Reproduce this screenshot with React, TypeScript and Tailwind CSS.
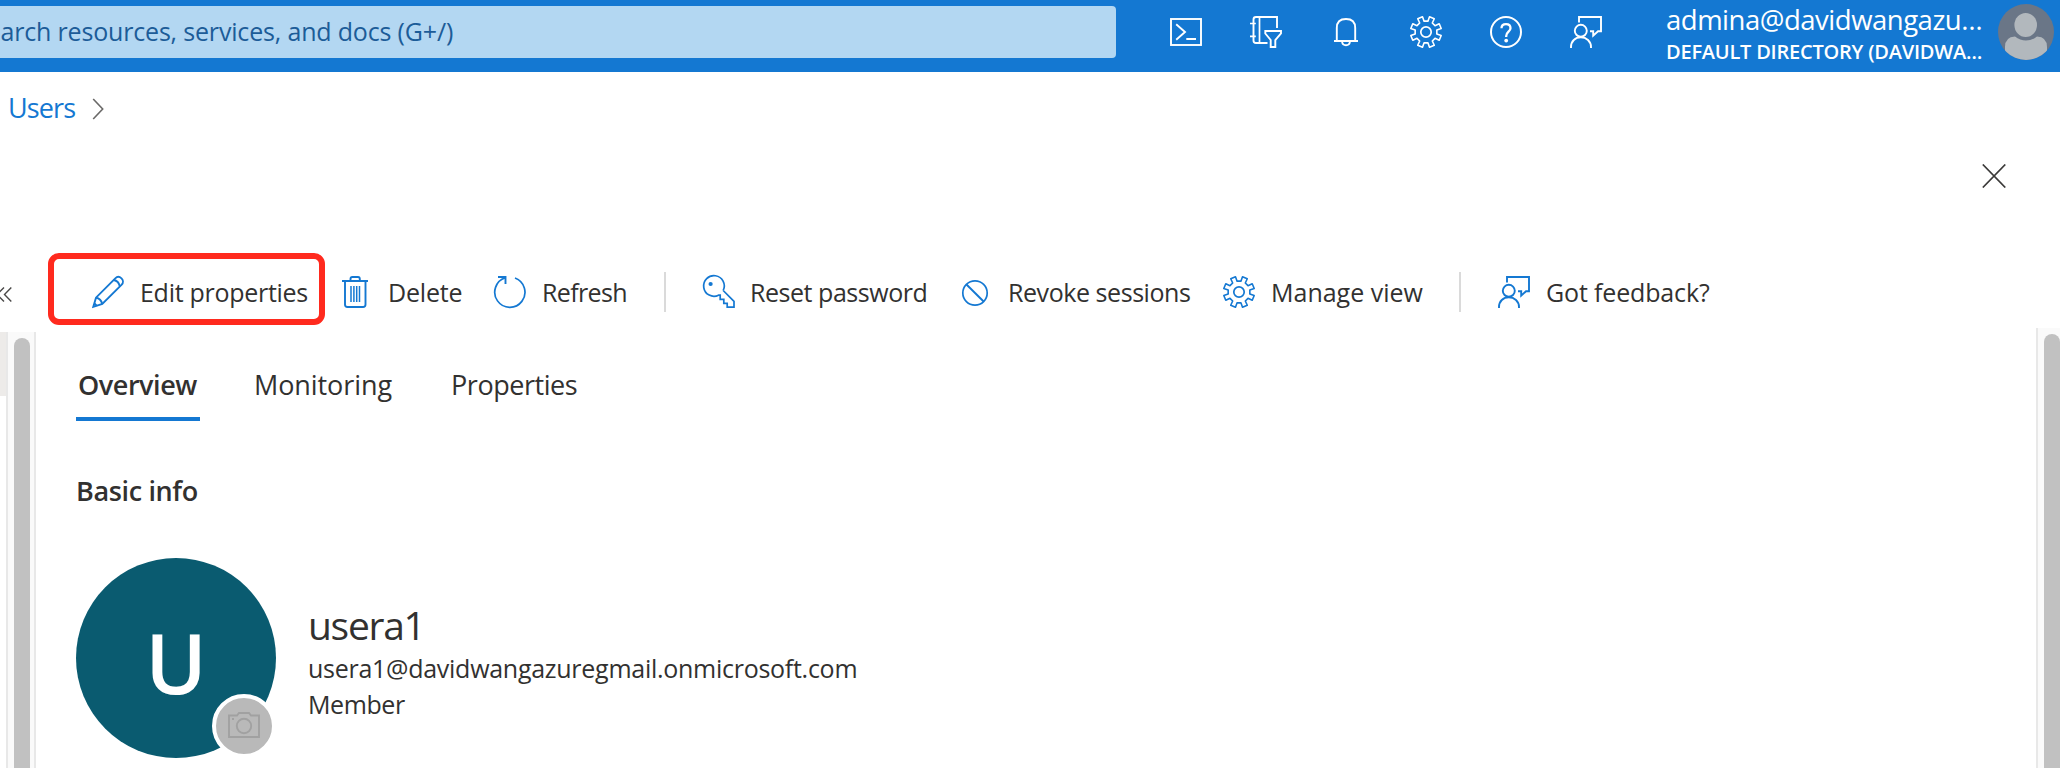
import React from "react";

type IconProps = { className?: string; children: React.ReactNode };

function Icon({ className = "", children }: IconProps) {
  return (
    <svg
      viewBox="0 0 32 32"
      className={`h-8 w-8 shrink-0 overflow-visible ${className}`}
      fill="none"
      stroke="currentColor"
      strokeWidth="1.9"
      strokeMiterlimit="10"
    >
      {children}
    </svg>
  );
}

// Eight-tooth cog with a notch at twelve o'clock.
const gearPath = (() => {
  const pt = (r: number, deg: number) => {
    const a = ((deg - 90) * Math.PI) / 180;
    return `${(16 + r * Math.cos(a)).toFixed(2)} ${(16 + r * Math.sin(a)).toFixed(2)}`;
  };
  const pts: string[] = [];
  for (let k = 0; k < 8; k++) {
    const c = 22.5 + 45 * k;
    pts.push(pt(11, c - 12.5), pt(15.6, c - 9.500), pt(15.6, c + 9.500), pt(11, c + 12.5));
  }
  return `M${pts.join("L")}Z`;
})();

const Terminal = () => (
  <Icon>
    <rect x="1" y="3" width="30" height="26" />
    <path d="M6.2 8.3 15 16 6.2 23.7M16.3 23H26" />
  </Icon>
);
const Directory = () => (
  <Icon>
    <path d="M27 12V1H6Q3.500 1 3.500 3.500V24.500Q3.500 27 6 27H17.500" />
    <path d="M9.500 1V27M0 7.500H5.800M0 20.300H5.800" strokeWidth="1.700" />
    <path d="M15.300 15H31V17.500L25.300 24V31H20.700V24L15.300 17.500Z" />
  </Icon>
);
const Bell = () => (
  <Icon>
    <path d="M6.800 25V12Q6.800 3 16 3T25.200 12V25M4 25H28M12 25.500Q12.500 29.300 16 29.300T20 25.500" />
  </Icon>
);
const Gear = () => (
  <Icon>
    <path d={gearPath} strokeWidth="1.600" strokeLinejoin="round" />
    <circle cx="16" cy="16" r="5.200" strokeWidth="1.700" />
  </Icon>
);
const Help = () => (
  <Icon>
    <circle cx="16" cy="16" r="15" strokeWidth="2" />
    <path d="M11.500 12.300C11.500 9.700 13.200 8.200 16 8.200S20.500 9.800 20.500 12.200C20.500 15.500 16.200 16 16.200 20V21" strokeWidth="2.300" />
    <circle cx="16.200" cy="24.600" r="1.900" fill="currentColor" stroke="none" />
  </Icon>
);
const Feedback = () => (
  <Icon>
    <path d="M9 6.500V1H31V15.300H28L23.200 19.700V15.300H20" />
    <circle cx="10.800" cy="14.800" r="6" />
    <path d="M1 32V31C1 25.300 5.200 21.300 10.800 21.300S21 25.300 21 31V32" />
  </Icon>
);
const Pencil = () => (
  <Icon>
    <path d="M1.300 30.800 4 21.700 23.300 2.300C25 .6 27.600 .6 29.500 2.400 31.400 4.300 31.400 6.900 29.700 8.600L10.300 28 1.300 30.800Z" />
    <path d="M21.700 4Q26.700 5 27.800 10.300M4 21.700Q9 22.500 10.300 28M2.500 27.500 4.700 29.700" />
  </Icon>
);
const Trash = () => (
  <Icon>
    <path d="M2 5H28M10.500 5V3Q10.500 1 12.300 1H18Q19.800 1 19.800 3V5M5 5V28.500Q5 31 7.500 31H23Q25.500 31 25.500 28.500V5" />
    <path d="M11 10V26M13.900 10V26M16.700 10V26M19.500 10V26" strokeWidth="1.500" />
  </Icon>
);
const Refresh = () => (
  <Icon>
    <path d="M21 2A15.100 15.100 0 1 1 11.300 1.800" strokeWidth="1.700" />
    <path d="M4 1H11.500V8" />
  </Icon>
);
const Key = () => (
  <Icon>
    <path d="M21.200 14.500A10.300 10.300 0 1 0 16.500 19.200H18.200V23.300H21.800V27.300H25.200V31.200H32V25.300L21.200 14.500" strokeWidth="1.700" />
    <circle cx="8.600" cy="8" r="2.100" fill="currentColor" stroke="none" />
  </Icon>
);
const Ban = () => (
  <Icon>
    <circle cx="15" cy="17" r="12.200" strokeWidth="1.700" />
    <path d="M6.500 8.500 23.600 25.500" />
  </Icon>
);

type Action = { label: string; icon: React.ReactNode; box: string; tracking: string; divider?: string };

const actions: Action[] = [
  { label: "Edit properties", icon: <Pencil />, box: "w-[248px]", tracking: "tracking-[-0.28px]" },
  { label: "Delete", icon: <Trash />, box: "w-[154px]", tracking: "tracking-[-0.2px]" },
  { label: "Refresh", icon: <Refresh />, box: "w-[170px]", tracking: "tracking-[-0.65px]", divider: "mr-9" },
  { label: "Reset password", icon: <Key />, box: "w-[258px]", tracking: "tracking-[-0.46px]" },
  { label: "Revoke sessions", icon: <Ban />, box: "w-[263px]", tracking: "tracking-[-0.44px]" },
  { label: "Manage view", icon: <Gear />, box: "w-[236px]", tracking: "tracking-[0px]", divider: "mr-[37px]" },
  { label: "Got feedback?", icon: <Feedback />, box: "w-[220px]", tracking: "tracking-[-0.15px]" },
];

function Header() {
  return (
    <header className="flex h-[72px] shrink-0 items-start bg-[#1478d2] text-white">
      <div className="mt-1.5 h-[52px] w-[1116px] overflow-hidden rounded-r bg-[#b3d7f2] text-[25px] leading-[51px] tracking-[-0.17px] text-[#1c5c98]">
        <span className="-ml-[27px]">Search resources, services, and docs (G+/)</span>
      </div>
      <nav className="ml-[54px] mt-4 flex gap-12">
        <Terminal />
        <Directory />
        <Bell />
        <Gear />
        <Help />
        <Feedback />
      </nav>
      <div className="ml-[64px] mt-1 w-[332px]">
        <div className="text-[27.5px] leading-8 tracking-[-0.48px]">admina@davidwangazu…</div>
        <div className="text-[20px] font-semibold leading-8 tracking-[-0.22px]">DEFAULT DIRECTORY (DAVIDWA…</div>
      </div>
      <svg viewBox="0 0 56 56" className="mt-1 h-14 w-14 shrink-0">
        <clipPath id="avatar">
          <circle cx="28" cy="28" r="28" />
        </clipPath>
        <g clipPath="url(#avatar)">
          <rect width="56" height="56" fill="#6a7687" />
          <path d="M7 56V43Q7 33 17 32.500Q22 36.500 28 36.500T39 32.500Q49 33 49 43V56Z" fill="#b2b8bd" />
          <ellipse cx="27.700" cy="21" rx="11.300" ry="12" fill="#b2b8bd" />
        </g>
      </svg>
    </header>
  );
}

function Toolbar() {
  return (
    <div className="relative flex h-20 items-center">
      <svg viewBox="0 0 12 16" className="mt-1 h-4 w-3 shrink-0" fill="none" stroke="#4a4948" strokeWidth="1.400">
        <path d="M4 1.500-3 8.500 4 15.500M11.300 1.500 4.500 8.500 11.300 15.500" />
      </svg>
      <div className="ml-20 flex h-10 items-center">
        {actions.map((a) => (
          <React.Fragment key={a.label}>
            <div className={`flex shrink-0 items-center gap-4 ${a.box}`}>
              <span className="text-[#1478d2]">{a.icon}</span>
              <span className={`whitespace-nowrap text-[25px] leading-[33px] ${a.tracking}`}>{a.label}</span>
            </div>
            {a.divider && <div className={`h-10 w-0.5 shrink-0 bg-[#dadada] ${a.divider}`} />}
          </React.Fragment>
        ))}
      </div>
      <div className="absolute left-[48px] top-[1px] h-[72px] w-[277px] rounded-[11px] border-[6px] border-[#ff2a1e]" />
    </div>
  );
}

export default function App() {
  return (
    <div className="flex h-[768px] w-[2060px] flex-col overflow-hidden bg-white font-['Open_Sans','Noto_Sans',sans-serif] text-[#323130]">
      <Header />
      <div className="flex h-[70px] shrink-0 items-center pl-2">
        <span className="mt-0.5 w-[84px] text-[27px] leading-9 tracking-[-0.9px] text-[#1478d2]">Users</span>
        <svg viewBox="0 0 12 22" className="mt-1 h-[22px] w-3" fill="none" stroke="#6a6968" strokeWidth="1.600">
          <path d="M1.200 1 10.700 11 1.200 21" />
        </svg>
      </div>
      <div className="flex h-[110px] shrink-0 justify-end pr-[54px] pt-[22px]">
        <svg viewBox="0 0 24 24" className="h-6 w-6" fill="none" stroke="#3b3a39" strokeWidth="1.700">
          <path d="M.8 .5 23.300 23.500M23.300 .5 .8 23.500" />
        </svg>
      </div>
      <Toolbar />
      <div className="flex min-h-0 flex-1 items-end">
        <div className="flex h-[436px] w-9 shrink-0">
          <div className="h-full w-1.5">
            <div className="h-16 bg-[#edebe9]" />
          </div>
          <div className="flex w-[30px] border-x-2 border-[#e8e8e8] bg-[#fafafa] pl-1.5 pt-1.5">
            <div className="h-full w-4 rounded-t-full bg-[#c1c1c1]" />
          </div>
        </div>
        <main className="h-[436px] flex-1 pl-10">
          <div className="flex h-[89px] items-stretch pt-8 text-[27px]">
            <div className="h-[57px] w-[124px] border-b-4 border-[#1478d2] pl-[2px] font-semibold leading-[42px] tracking-[-0.45px]">Overview</div>
            <div className="ml-[54px] w-[197px] leading-[42px] tracking-[-0.08px]">Monitoring</div>
            <div className="leading-[42px] tracking-[-0.45px]">Properties</div>
          </div>
          <h2 className="mt-[50px] text-[27px] font-semibold leading-[40px] tracking-[-0.36px]">Basic info</h2>
          <div className="mt-[47px] flex">
            <div className="relative flex h-[200px] w-[200px] items-center justify-center rounded-full bg-[#0a5b70] text-white">
              <span className="mt-[6px] text-[83px] font-semibold leading-none">U</span>
              <div className="absolute left-[136px] top-[136px] flex h-16 w-16 items-center justify-center rounded-full border-4 border-white bg-[#b9b9b9] text-[#a1a1a1]">
                <Icon>
                  <path d="M1 5.500H9L11 3H21L23 5.500H31V27H1Z" />
                  <circle cx="16" cy="16" r="7.200" />
                  <path d="M4 9H6" />
                </Icon>
              </div>
            </div>
            <div className="ml-8 pt-[42px]">
              <div className="text-[39px] leading-[50px] tracking-[-1.3px]">usera1</div>
              <div className="text-[25px] leading-[36px] tracking-[-0.27px]">usera1@davidwangazuregmail.onmicrosoft.com</div>
              <div className="text-[25px] leading-[36px] tracking-[-0.4px]">Member</div>
            </div>
          </div>
        </main>
        <div className="flex h-[440px] w-6 shrink-0 border-l-2 border-[#e8e8e8] bg-[#fafafa] pl-1.5 pt-1.5">
          <div className="h-full w-4 rounded-t-full bg-[#c1c1c1]" />
        </div>
      </div>
    </div>
  );
}
